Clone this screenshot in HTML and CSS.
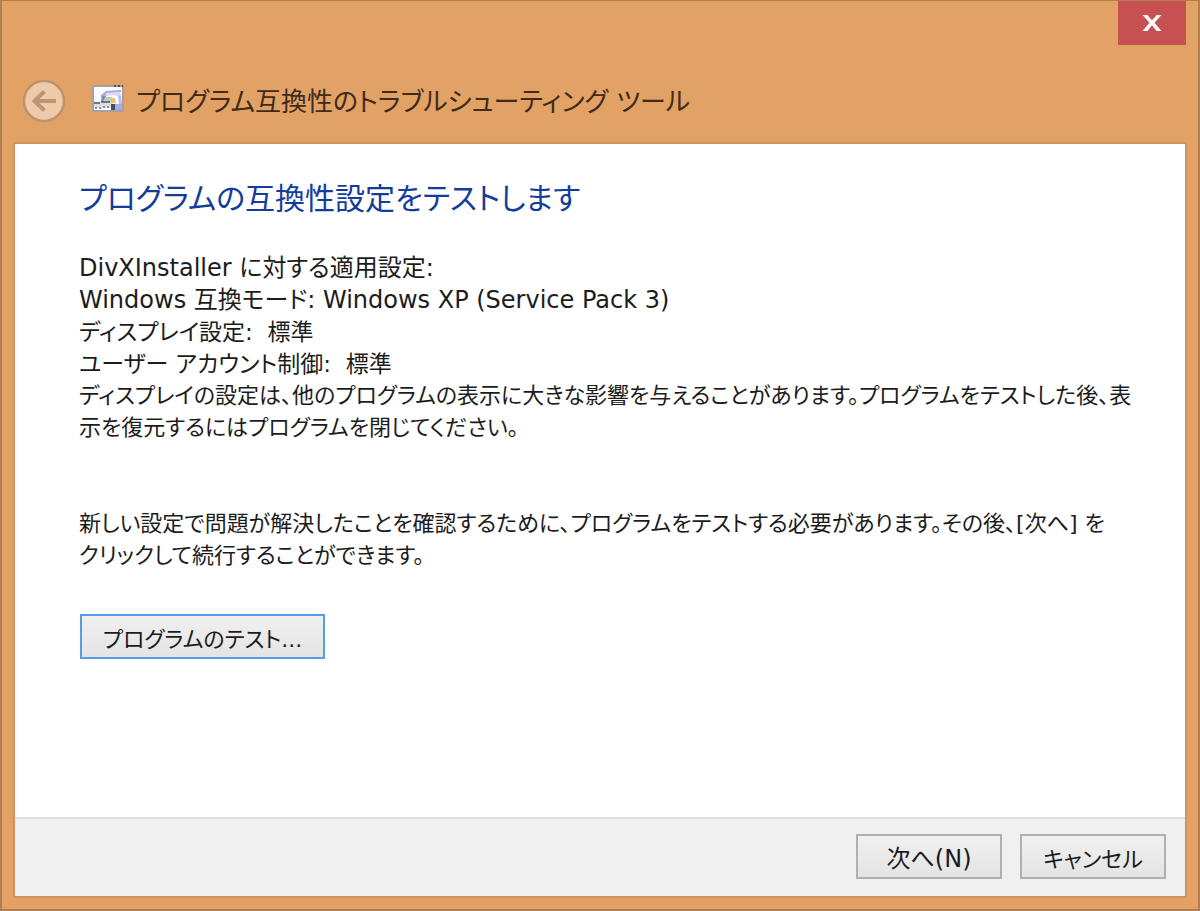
FILE: index.html
```html
<!DOCTYPE html>
<html lang="ja">
<head>
<meta charset="utf-8">
<title>プログラム互換性のトラブルシューティング ツール</title>
<link rel="stylesheet" href="styles.css">
</head>
<body>
<div class="window">
  <div class="titlebar">
    <button class="close" type="button" aria-label="閉じる">
      <svg width="20" height="16" viewBox="0 0 20 17"><path d="M0 0h5l5 5.500L15 0h5l-7.300 8.200L20 17h-5.200L10 11 5.200 17H0l7.300-8.800z" fill="#fff"/></svg>
    </button>
  </div>
  <header class="header">
    <button class="back" type="button" aria-label="戻る">
      <svg width="44" height="44" viewBox="0 0 44 44"><circle cx="22" cy="22" r="20" fill="#eecaa8" stroke="#bd936c" stroke-width="2.500"/><path d="M34 22H13M22.500 12.500L12.500 22l10 9.500" fill="none" stroke="#bb9574" stroke-width="4"/></svg>
    </button>
    <svg class="app-icon" width="32" height="28" viewBox="0 0 32 28">
      <rect x="1" y="1" width="30" height="25" rx="1" fill="#fcfcfe" stroke="#a5a09f" stroke-width="2"/>
      <path d="M22 1h2M26 1h2M30 1h1" stroke="#5a4c43" stroke-width="2"/>
      <path d="M9 10l5-4 15-1v2l-11 1-4 3-5 2z" fill="#a9aae0"/>
      <path d="M14 8l14-1 2 6-8-3-8 1z" fill="#d9daf5"/>
      <path d="M26 10l3 1 1 8h-3z" fill="#b9bcec"/>
      <path d="M10 11h4l-2 6h-3z" fill="#7f86b5"/>
      <path d="M13 12h7l2 5H11z" fill="#b3d0c2"/>
      <path d="M19 13h4l1 5h-6z" fill="#e7c578"/>
      <path d="M23 19h7v6h-7z" fill="#a6aceb"/>
      <path d="M2 17l7-1 12 2v4l-4 1H2z" fill="#dcdce2"/>
      <path d="M2 18h6M9 17h9" fill="none" stroke="#74767f" stroke-width="2"/>
      <path d="M3 23h2M7 23h2M11 22h2M15 22h2" stroke="#92949c" stroke-width="2"/>
      <path d="M19 19h4v6h-4z" fill="#4c4e52"/>
    </svg>
    <h1 class="title">プログラム互換性のトラブルシューティング ツール</h1>
  </header>
  <div class="client">
    <main class="content">
      <h2 class="heading">プログラムの互換性設定をテストします</h2>
      <p class="text large">DivXInstaller に対する適用設定:<br>Windows 互換モード: Windows XP (Service Pack 3)</p>
      <p class="text medium">ディスプレイ設定:&nbsp; 標準<br>ユーザー アカウント制御:&nbsp; 標準</p>
      <p class="text">ディスプレイの設定は、他のプログラムの表示に大きな影響を与えることがあります。プログラムをテストした後、表<br>示を復元するにはプログラムを閉じてください。</p>
      <p class="text note">新しい設定で問題が解決したことを確認するために、プログラムをテストする必要があります。その後、[次へ] を<br>クリックして続行することができます。</p>
      <button class="button test" type="button">プログラムのテスト...</button>
    </main>
    <footer class="footer">
      <button class="button large" type="button">次へ(N)</button>
      <button class="button" type="button">キャンセル</button>
    </footer>
  </div>
</div>
</body>
</html>
```
FILE: styles.css
```css
* {
  box-sizing: border-box;
}

body {
  margin: 0;
  font-family: "DejaVu Sans", "Noto Sans CJK JP", sans-serif;
  font-size: 22px;
  font-feature-settings: "palt";
  color: #1c1c1c;
}

.window {
  display: flex;
  flex-direction: column;
  min-height: 100vh;
  padding: 0 12px 11px;
  border: 2px solid #b17e50;
  border-top-width: 1px;
  background: #e2a165;
}

.titlebar {
  display: flex;
  justify-content: flex-end;
}

.close {
  display: flex;
  align-items: center;
  justify-content: center;
  width: 68px;
  height: 44px;
  padding: 0;
  border: 0;
  background: #c75050;
}

.header {
  display: flex;
  align-items: center;
  height: 97px;
  padding: 14px 8px 0;
}

.back {
  display: flex;
  padding: 0;
  border: 0;
  background: none;
}

.app-icon {
  margin: 0 12px 4px 26px;
}

.title {
  margin: 0;
  padding-top: 2px;
  font-size: 26px;
  font-weight: 400;
  line-height: 40px;
  white-space: nowrap;
  color: #402b1a;
}

.client {
  display: flex;
  flex: 1;
  flex-direction: column;
  border: 2px solid #ce935f;
  background: #fff;
  margin: 0 -1px;
}

.content {
  flex: 1;
  padding: 33px 40px 32px 64px;
}

.heading {
  margin: 0 0 31px;
  font-size: 30px;
  font-weight: 400;
  line-height: 44px;
  white-space: nowrap;
  color: #133c9c;
}

.text {
  margin: 0;
  line-height: 32px;
  white-space: nowrap;
}

.note {
  margin-top: 64px;
}

.button {
  min-width: 146px;
  height: 45px;
  padding: 0 16px;
  border: 2px solid #b0b0b0;
  background: linear-gradient(#f0f0f0, #e4e4e4);
  font: inherit;
  font-feature-settings: inherit;
  color: inherit;
}

.large {
  font-size: 24px;
}

.medium {
  font-size: 23px;
}

.test {
  min-width: 245px;
  margin: 42px 0 0 1px;
  border-color: #569de5;
}

.footer {
  display: flex;
  justify-content: flex-end;
  gap: 18px;
  padding: 15px 19px 17px;
  border-top: 2px solid #dfdfdf;
  background: #f0f0f0;
}

.footer .large {
  font-size: 24px;
}
```
